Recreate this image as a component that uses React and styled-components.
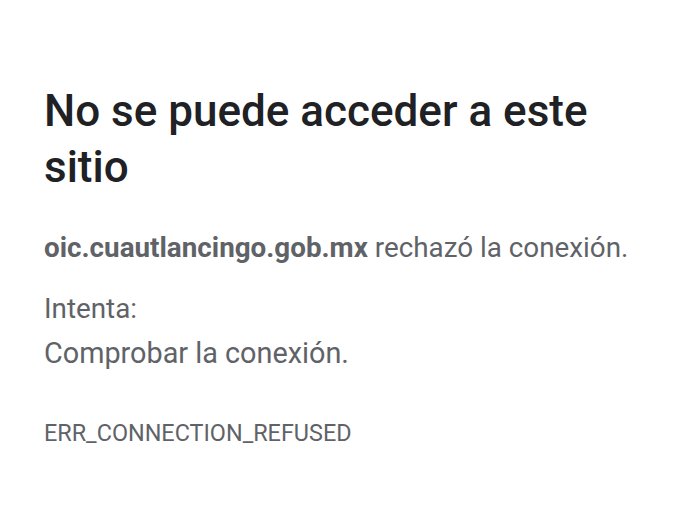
import styled, { createGlobalStyle } from "styled-components";

const GlobalStyle = createGlobalStyle`
  html, body {
    margin: 0;
    padding: 0;
    background: #ffffff;
  }
  body {
    font-family: Roboto, "Noto Sans", "Liberation Sans", sans-serif;
    -webkit-font-smoothing: antialiased;
  }
`;

const Page = styled.main`
  width: 699px;
  height: 505px;
  box-sizing: border-box;
  padding: 83px 44px 0 44px;
  overflow: hidden;
`;

const Heading = styled.h1`
  margin: 0;
  font-size: 44px;
  line-height: 56px;
  font-weight: 500;
  color: #202124;
  width: 600px;
`;

const Message = styled.p`
  margin: ${(p) => p.$top || 0}px 0 0 0;
  font-size: 27.8px;
  line-height: 45px;
  color: #5f6368;
`;

const Domain = styled.strong`
  font-weight: 700;
  color: #5f6368;
`;

const Suggestions = styled.ul`
  margin: 0;
  padding: 0;
  list-style: none;
`;

const Suggestion = styled.li`
  font-size: 28.8px;
  line-height: 45px;
  color: #5f6368;
`;

const ErrorCode = styled.div`
  margin-top: 42px;
  font-size: 23.4px;
  line-height: 30px;
  color: #5f6368;
  text-transform: uppercase;
`;

export default function App() {
  return (
    <>
      <GlobalStyle />
      <Page>
        <Heading>No se puede acceder a este sitio</Heading>
        <Message $top={30}>
          <Domain>oic.cuautlancingo.gob.mx</Domain> rechazó la conexión.
        </Message>
        <Message $top={16}>Intenta:</Message>
        <Suggestions>
          <Suggestion>Comprobar la conexión.</Suggestion>
        </Suggestions>
        <ErrorCode>ERR_CONNECTION_REFUSED</ErrorCode>
      </Page>
    </>
  );
}
